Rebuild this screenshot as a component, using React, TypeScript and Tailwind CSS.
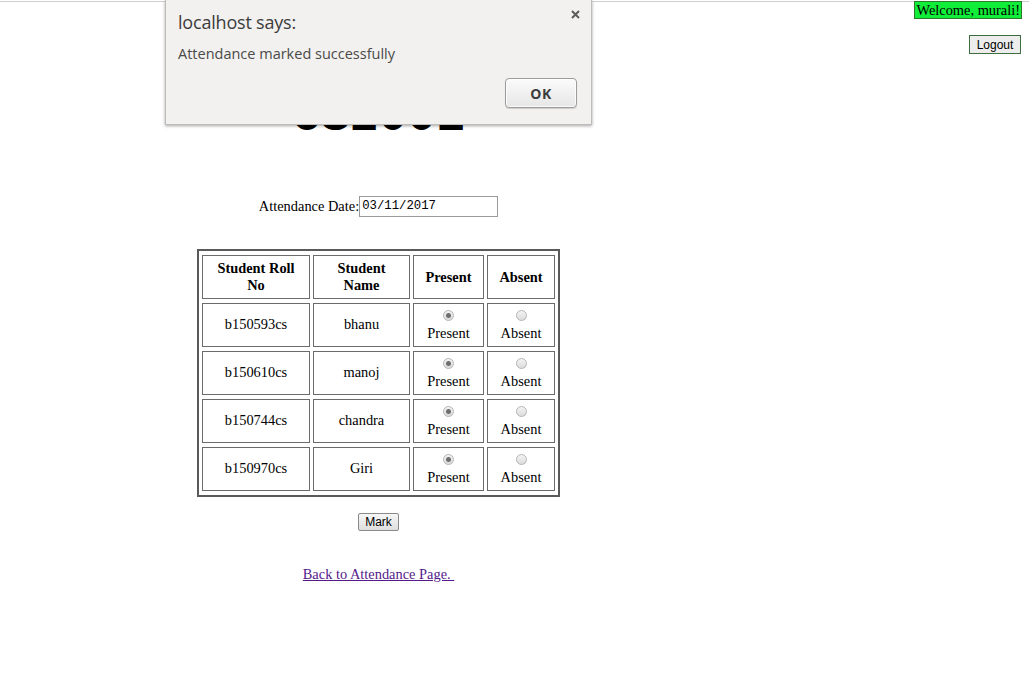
import React from "react";

const students = [
  { roll: "b150593cs", name: "bhanu" },
  { roll: "b150610cs", name: "manoj" },
  { roll: "b150744cs", name: "chandra" },
  { roll: "b150970cs", name: "Giri" },
];

const Radio = ({ checked }: { checked: boolean }) => (
  <span className="inline-flex w-[11px] h-[11px] rounded-full border border-[#b4b4b4] bg-gradient-to-b from-[#f4f4f4] to-[#dcdcdc] items-center justify-center">
    {checked && <span className="w-[5px] h-[5px] rounded-full bg-[#6e6e6e]" />}
  </span>
);

const ChoiceCell = ({ label, checked }: { label: string; checked: boolean }) => (
  <td className="border border-[#6b6b6b] text-center align-middle p-0">
    <div className="flex flex-col items-center leading-[17px]">
      <div className="h-[15px] flex items-center">
        <Radio checked={checked} />
      </div>
      <span className="mt-[2px]">{label}</span>
    </div>
  </td>
);

export default function App() {
  return (
    <div className="relative w-[1029px] h-[680px] overflow-hidden bg-white text-black font-['Liberation_Serif',serif] text-[14.4px]">
      <div className="mt-px h-px bg-[#cfcfcf]" />
      <div className="flex">
        {/* Main column */}
        <div className="w-[757px] flex flex-col items-center">
          <h1 className="mt-[88px] h-[54px] leading-[54px] font-['Liberation_Mono',monospace] font-bold text-[48px]">
            CS2001
          </h1>

          <div className="mt-[51px] flex items-center h-[22px]">
            <span className="leading-[17px]">Attendance Date:</span>
            <input
              type="text"
              readOnly
              value="03/11/2017"
              className="w-[139px] h-[21px] border border-[#9a9a9a] px-[2px] font-['Liberation_Mono',monospace] text-[12.3px] outline-none"
            />
          </div>

          <table className="mt-[32px] border-2 border-[#5a5a5a] border-separate border-spacing-x-[3px] border-spacing-y-[4px]">
            <thead>
              <tr className="h-[44px] font-bold leading-[17px]">
                <th className="w-[108px] border border-[#6b6b6b] px-1">
                  Student Roll
                  <br />
                  No
                </th>
                <th className="w-[97px] border border-[#6b6b6b] px-1">
                  Student
                  <br />
                  Name
                </th>
                <th className="w-[71px] border border-[#6b6b6b]">Present</th>
                <th className="w-[68px] border border-[#6b6b6b]">Absent</th>
              </tr>
            </thead>
            <tbody>
              {students.map((s) => (
                <tr key={s.roll} className="h-[44px]">
                  <td className="border border-[#6b6b6b] text-center align-middle">{s.roll}</td>
                  <td className="border border-[#6b6b6b] text-center align-middle">{s.name}</td>
                  <ChoiceCell label="Present" checked />
                  <ChoiceCell label="Absent" checked={false} />
                </tr>
              ))}
            </tbody>
          </table>

          <button className="mt-[16px] w-[41px] h-[18px] border border-[#8a8a8a] rounded-[2px] bg-gradient-to-b from-[#f6f6f6] to-[#dedede] font-['Liberation_Sans',sans-serif] text-[12px] leading-[16px]">
            Mark
          </button>

          <a
            href="#"
            className="mt-[35px] leading-[17px] text-[#551a8b] underline whitespace-pre"
          >
            {"Back to Attendance Page. "}
          </a>
        </div>

        {/* Right column */}
        <div className="flex-1 flex flex-col items-end pr-[7px]">
          <div className="-mt-px bg-[#11ee3a] border border-[#2d7a2d] px-px leading-[16px]">
            Welcome, murali!
          </div>
          <button className="mt-[16px] mr-px w-[52px] h-[19px] border border-[#3e6e3e] bg-[#ededed] font-['Liberation_Sans',sans-serif] text-[12px] leading-[16px]">
            Logout
          </button>
        </div>
      </div>

      {/* Alert dialog */}
      <div className="absolute left-[165px] top-0 w-[427px] h-[125px] bg-[#f2f1ef] border border-t-0 border-[#bdbcb8] shadow-[0_1px_3px_rgba(0,0,0,0.35)] font-['Open_Sans',sans-serif]">
        <button className="absolute right-[10px] top-[8px] w-[12px] h-[12px] flex items-center justify-center">
          <svg width="9" height="9" viewBox="0 0 9 9">
            <path d="M1 1L8 8M8 1L1 8" stroke="#5c5c5c" strokeWidth="2" />
          </svg>
        </button>
        <div className="pl-[12px] pt-[9px] text-[18px] leading-[26px] text-[#3c3c3c] tracking-[-0.2px]">
          localhost says:
        </div>
        <div className="pl-[12px] mt-[9px] text-[14.5px] leading-[20px] text-[#4a4a4a]">
          Attendance marked successfully
        </div>
        <div className="flex justify-end pr-[14px] mt-[14px]">
          <button className="w-[72px] h-[30px] rounded-[4px] border border-[#9c9c9c] bg-gradient-to-b from-[#fbfbfb] to-[#e6e6e6] shadow-[inset_0_0_0_1px_rgba(255,255,255,0.8),0_1px_1px_rgba(0,0,0,0.15)] text-[14px] font-bold text-[#3c3c3c] tracking-[0.5px]">
            OK
          </button>
        </div>
      </div>
    </div>
  );
}
